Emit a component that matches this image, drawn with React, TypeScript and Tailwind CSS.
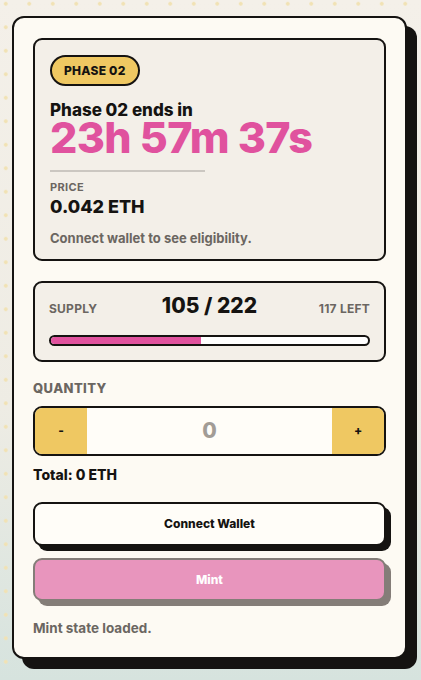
import { useState } from "react"

export default function App() {
    const [qty, setQty] = useState(0)
    const minted = 105
    const total = 222
    const pct = (minted / total) * 100

    return (
        <div className="min-h-screen bg-[linear-gradient(180deg,#f4f0e9_0%,#eeece4_60%,#d6e3de_100%)] font-['Inter',sans-serif]">
            <div className="min-h-screen bg-[radial-gradient(circle,#f1e2b4_1.5px,transparent_2.2px)] bg-[size:23.5px_23.5px] bg-[position:-6px_-8px] pt-[16px] pl-[12px]">
                {/* Card */}
                <div className="w-[395px] rounded-[12px] border-2 border-[#151311] bg-[#fdfaf3] px-[19px] pt-5 pb-5 shadow-[10px_10px_0_#151311]">
                    {/* Phase panel */}
                    <div className="rounded-[9px] border-2 border-[#151311] bg-[#f3efe8] px-[15px] pt-[15px] pb-[12px]">
                        <span className="inline-flex h-[31px] items-center rounded-full border-2 border-[#151311] bg-[#efc862] px-[12px] text-[12px] font-extrabold tracking-[0.02em] text-[#151311]">
                            PHASE 02
                        </span>
                        <p className="mt-[15px] text-[17px] leading-[18px] font-extrabold text-[#151311]">Phase 02 ends in</p>
                        <p className="text-[43px] leading-[36px] font-extrabold tracking-[-0.015em] text-[#e0529e]">23h 57m 37s</p>
                        <div className="mt-[15px] h-[2px] w-[155px] bg-[#cbc7c1]" />
                        <p className="mt-[8px] text-[11px] leading-[14px] font-bold tracking-[0.03em] text-[#6b6661]">PRICE</p>
                        <p className="mt-[2px] text-[18px] leading-[22px] font-extrabold text-[#151311]">0.042 ETH</p>
                        <p className="mt-[11px] text-[13px] leading-[18px] font-bold text-[#6b6661]">Connect wallet to see eligibility.</p>
                    </div>

                    {/* Supply panel */}
                    <div className="mt-5 rounded-[9px] border-2 border-[#151311] bg-[#f3efe8] px-[14px] pt-[9px] pb-[14px]">
                        <div className="flex items-baseline justify-between">
                            <span className="w-[90px] text-[12px] font-bold tracking-[0.02em] text-[#6b6661]">SUPPLY</span>
                            <span className="text-[21px] leading-[28px] font-extrabold text-[#151311]">{minted} / {total}</span>
                            <span className="w-[90px] text-right text-[12px] font-bold tracking-[0.02em] text-[#6b6661]">{total - minted} LEFT</span>
                        </div>
                        <div className="mt-[15px] h-[11px] overflow-hidden rounded-full border-2 border-[#151311] bg-white">
                            <div className="h-full bg-[#e0529e]" style={{ width: `${pct}%` }} />
                        </div>
                    </div>

                    {/* Quantity */}
                    <p className="mt-[17px] text-[13px] leading-[18px] font-extrabold tracking-[0.03em] text-[#6b6661]">QUANTITY</p>
                    <div className="mt-[9px] flex h-[50px] overflow-hidden rounded-[9px] border-2 border-[#151311] bg-[#fffdf8]">
                        <button
                            onClick={() => setQty(Math.max(0, qty - 1))}
                            className="w-[52px] bg-[#efc862] text-[12px] font-extrabold text-[#151311]"
                        >
                            -
                        </button>
                        <div className="flex flex-1 items-center justify-center text-[21px] font-extrabold text-[#a29c96]">{qty}</div>
                        <button
                            onClick={() => setQty(qty + 1)}
                            className="w-[52px] bg-[#efc862] text-[12px] font-extrabold text-[#151311]"
                        >
                            +
                        </button>
                    </div>
                    <p className="mt-[9px] text-[14px] leading-[20px] font-extrabold text-[#151311]">Total: {qty} ETH</p>

                    {/* Buttons */}
                    <button className="mt-[17px] flex h-[44px] w-full items-center justify-center rounded-[9px] border-2 border-[#151311] bg-[#fffdf8] text-[12px] font-extrabold text-[#151311] shadow-[5px_5px_0_#151311]">
                        Connect Wallet
                    </button>
                    <button className="mt-[12px] flex h-[43px] w-full items-center justify-center rounded-[9px] border-2 border-[#847d78] bg-[#e895bd] text-[12px] font-extrabold text-white shadow-[5px_5px_0_#847d78]">
                        Mint
                    </button>

                    <p className="mt-[18px] text-[13.5px] leading-[18px] font-bold text-[#6b6661]">Mint state loaded.</p>
                </div>
            </div>
        </div>
    )
}
